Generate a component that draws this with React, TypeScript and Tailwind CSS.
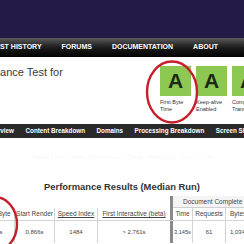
import React from 'react'

const grades = [
  { label: ['First Byte', 'Time'] },
  { label: ['Keep-alive', 'Enabled'] },
  { label: ['Compress', 'Transfer'] },
]

const tabs = ['Overview', 'Content Breakdown', 'Domains', 'Processing Breakdown', 'Screen Shot']

const App: React.FC = () => {
  return (
    <div className="relative w-[244px] h-[244px] overflow-hidden bg-white font-['Liberation_Sans',Arial,sans-serif] text-[#333]">
      {/* Site header */}
      <div className="h-[38px] bg-[#231b45]" />

      {/* Main menu */}
      <nav className="h-[19px] flex items-center gap-[20px] bg-gradient-to-b from-[#5c5c5c] via-[#1c1c1c] to-[#040404] text-white font-bold text-[7px] uppercase whitespace-nowrap">
        <span className="ml-[-9px]">Test History</span>
        <span>Forums</span>
        <span>Documentation</span>
        <span>About</span>
      </nav>

      {/* Title + grades */}
      <div className="h-[67px] flex">
        <div className="w-[160px] shrink-0 pt-[9px] overflow-hidden">
          <h1 className="ml-[-39px] text-[11px] leading-[12px] text-[#3a3a3a] whitespace-nowrap">
            Performance Test for
          </h1>
        </div>
        <div className="flex gap-[5px] pt-[9px]">
          {grades.map((g, i) => (
            <div key={i} className="w-[31px] shrink-0">
              <div className="w-[31px] h-[30px] bg-[#8dc852] flex items-center justify-center text-[21px] font-bold text-[#1b2a12]">
                A
              </div>
              <div className="mt-[3px] text-[5.5px] leading-[7px] text-[#333] whitespace-nowrap">
                {g.label[0]}
                <br />
                {g.label[1]}
              </div>
            </div>
          ))}
        </div>
      </div>

      {/* Result tabs */}
      <div className="h-[14px] flex items-center gap-[11.5px] bg-[#2a2a2a] text-white font-bold text-[6.3px] whitespace-nowrap">
        {tabs.map((t, i) => (
          <span key={t} className={i === 0 ? 'ml-[-14px]' : ''}>
            {t}
          </span>
        ))}
      </div>

      <p className="mt-[15px] text-center text-[6px] leading-[8px] text-[#f8f8f8] whitespace-nowrap">
        Tested From: Dulles, VA - Chrome - Cable - 3/14/2018, 10:21:44 AM
      </p>

      <h2 className="mt-[20px] text-center text-[9.4px] leading-[12px] font-bold text-[#333]">
        Performance Results (Median Run)
      </h2>

      {/* Results table */}
      <div className="mt-[3px] ml-[-17px] w-[290px] text-[6.5px] text-[#444] whitespace-nowrap">
        <div className="flex h-[12px]">
          <div className="w-[187px]" />
          <div className="w-[3px] bg-[#8a8a8a]" />
          <div className="flex-1 bg-[#f4f4f4] border-b border-[#cfcfcf] flex items-center pl-[10px]">
            Document Complete
          </div>
        </div>
        <div className="flex h-[13px] border-b border-[#d4d4d4]">
          <div className="w-[32px] border-r border-[#d4d4d4] flex items-center justify-center pr-[3px]">First Byte</div>
          <div className="w-[40px] border-r border-[#d4d4d4] flex items-center justify-center">Start Render</div>
          <div className="w-[43px] border-r border-[#d4d4d4] flex items-center justify-center underline">Speed Index</div>
          <div className="w-[72px] flex items-center justify-center underline">First Interactive (beta)</div>
          <div className="w-[3px] bg-[#8a8a8a]" />
          <div className="w-[20px] border-r border-[#d4d4d4] flex items-center justify-center">Time</div>
          <div className="w-[33px] border-r border-[#d4d4d4] flex items-center justify-center">Requests</div>
          <div className="w-[40px] flex items-center pl-[4px]">Bytes In</div>
        </div>
        <div className="flex h-[22px] text-[6px]">
          <div className="w-[32px] border-r border-[#d4d4d4] flex items-center justify-center pr-[10px]">0.396s</div>
          <div className="w-[40px] border-r border-[#d4d4d4] flex items-center justify-center">0.866s</div>
          <div className="w-[43px] border-r border-[#d4d4d4] flex items-center justify-center">1484</div>
          <div className="w-[72px] flex items-center justify-center">&gt; 2.761s</div>
          <div className="w-[3px] bg-[#8a8a8a]" />
          <div className="w-[20px] border-r border-[#d4d4d4] flex items-center justify-center text-[5.6px]">3.145s</div>
          <div className="w-[33px] border-r border-[#d4d4d4] flex items-center justify-center">61</div>
          <div className="w-[40px] flex items-center pl-[4px]">1,034 KB</div>
        </div>
      </div>

      {/* Red annotation circles */}
      <svg className="absolute inset-0 pointer-events-none" width="244" height="244" viewBox="0 0 244 244">
        <ellipse cx="172" cy="92" rx="25" ry="30.5" fill="none" stroke="#c61f2b" strokeWidth="2.4" />
        <ellipse cx="-5" cy="224" rx="22" ry="27" fill="none" stroke="#c61f2b" strokeWidth="2.4" />
      </svg>
    </div>
  )
}

export default App
